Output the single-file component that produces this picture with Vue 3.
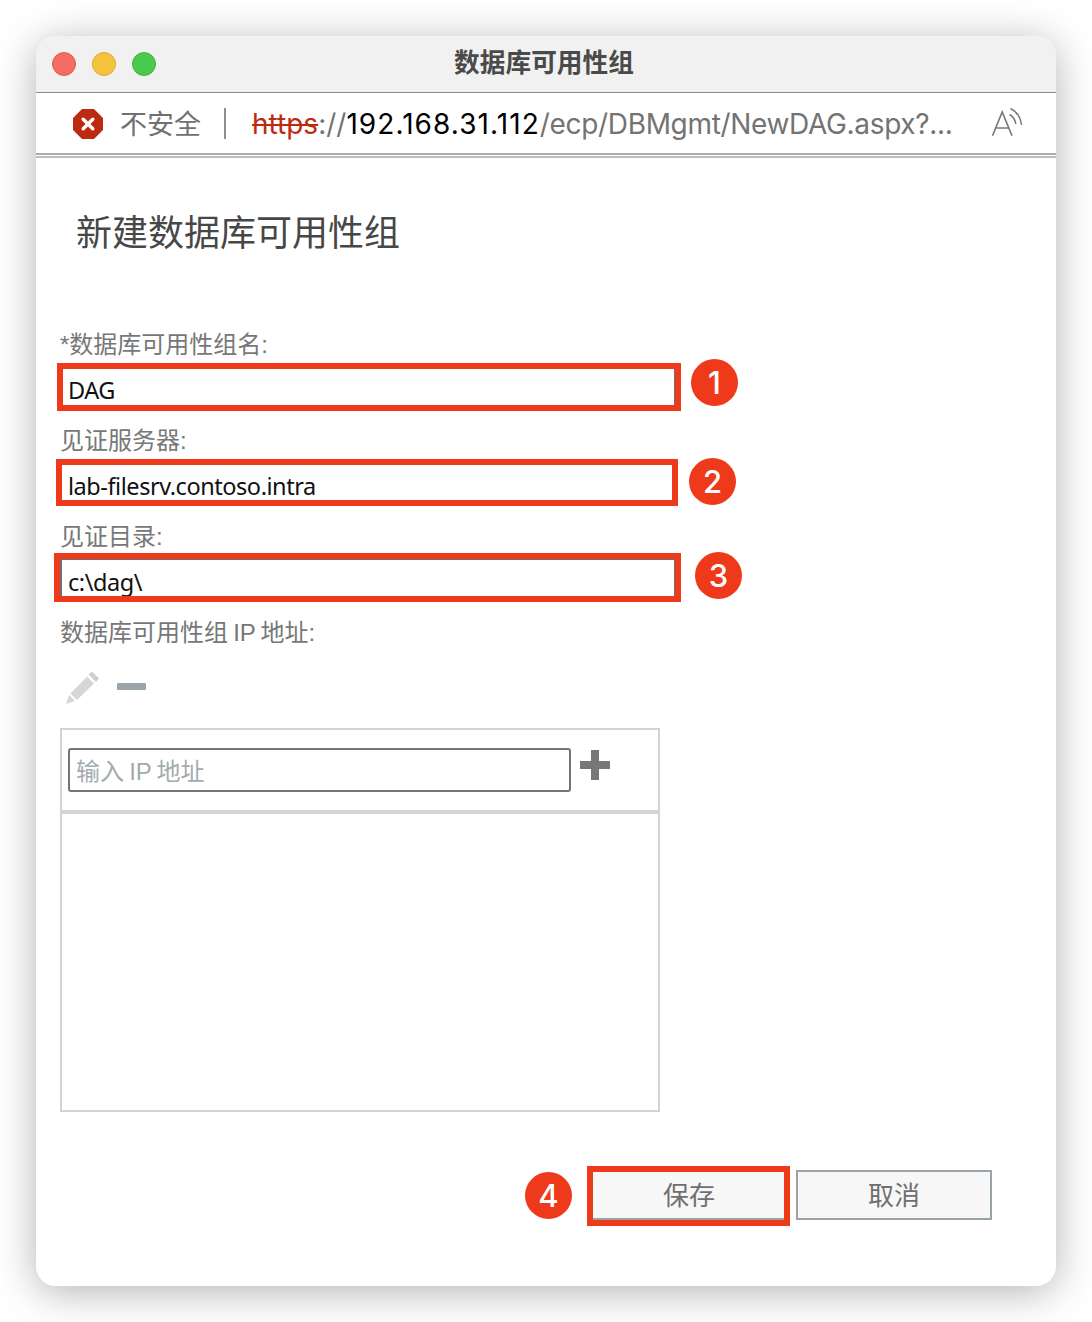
<script setup>
const fields = [
  { label: '*数据库可用性组名:', value: 'DAG', mark: 'mark-a', badge: 'badge-a', n: 1 },
  { label: '见证服务器:', value: 'lab-filesrv.contoso.intra', mark: 'mark-b', badge: 'badge-b', n: 2 },
  { label: '见证目录:', value: 'c:\\dag\\', mark: 'mark-c', badge: 'badge-c', n: 3 }
]
</script>

<template>
  <div class="stage">
    <div class="window">
      <header class="titlebar">
        <div class="lights">
          <span class="light red"></span>
          <span class="light yellow"></span>
          <span class="light green"></span>
        </div>
        <div class="wintitle">数据库可用性组</div>
      </header>

      <div class="addressbar">
        <svg class="warn" width="30" height="30" viewBox="0 0 30 30">
          <path d="M9 0h12l9 9v12l-9 9H9l-9-9V9z" fill="#bd2a12" />
          <path d="M10.2 10.2l9.6 9.6M19.8 10.2l-9.6 9.6" stroke="#fff" stroke-width="3.4" stroke-linecap="round" />
        </svg>
        <span class="insecure">不安全</span>
        <span class="sep"></span>
        <span class="url"><span class="scheme">https</span>://<span class="host">192.168.31.112</span><span class="path">/ecp/DBMgmt/NewDAG.aspx?...</span></span>
        <svg class="readaloud" width="32" height="32" viewBox="0 0 32 32" fill="none" stroke="#7b7b7b" stroke-width="1.7">
          <path d="M1.500 28.700L11.200 5l9.800 23.700M4.800 21h12.800" />
          <path d="M18.500 7.500c3.200 1.800 5.600 5 6.300 9.500M19.500 1.500c6 2.800 10 9 11 16.500" stroke-width="1.500" />
        </svg>
      </div>
      <div class="doubleline"></div>

      <main class="content">
        <h1 class="heading">新建数据库可用性组</h1>

        <div class="form">
          <div v-for="f in fields" :key="f.n" class="field">
            <div class="label">{{ f.label }}</div>
            <div class="inputwrap">
              <div class="input">{{ f.value }}</div>
              <span class="mark" :class="f.mark"></span>
              <span class="badge" :class="f.badge">{{ f.n }}</span>
            </div>
          </div>

          <div class="label">数据库可用性组 IP 地址:</div>

          <div class="tools">
            <svg class="pencil" width="34" height="34" viewBox="0 0 34 34">
              <path d="M26 1.500l7 7-3 3.500-7.500-7.500z" fill="#cfcfcf" />
              <path d="M21 6.500l7 7L11 30l-6.500-6.500z" fill="#d6d6d6" />
              <path d="M3 25l6 6-9 3z" fill="#d6d6d6" />
            </svg>
            <span class="minus"></span>
          </div>

          <div class="panel">
            <div class="panel-top">
              <div class="ipinput">输入 IP 地址</div>
              <span class="plus"></span>
            </div>
            <div class="panel-list"></div>
          </div>

          <div class="actions">
            <div class="savewrap">
              <span class="badge badge-d">4</span>
              <button class="btn">保存</button>
              <span class="mark mark-d"></span>
            </div>
            <button class="btn">取消</button>
          </div>
        </div>
      </main>
    </div>
  </div>
</template>

<style>
html, body { margin: 0; background: #fff; }
</style>

<style scoped>
.stage {
  width: 1092px;
  height: 1322px;
  padding: 36px;
  box-sizing: border-box;
  background: #fff;
  overflow: hidden;
  font-family: "Noto Sans", "Noto Sans CJK SC", sans-serif;
}
.window {
  width: 1020px;
  height: 1250px;
  background: #fff;
  border-radius: 20px;
  box-shadow: 0 6px 40px rgba(0, 0, 0, 0.3);
  overflow: hidden;
  display: flex;
  flex-direction: column;
}
.titlebar {
  height: 57px;
  flex: none;
  box-sizing: border-box;
  background: #f1f1f1;
  border-bottom: 1px solid #8c8c8c;
  position: relative;
  display: flex;
  align-items: center;
  justify-content: center;
}
.lights {
  position: absolute;
  left: 16px;
  top: 16px;
  display: flex;
  gap: 16px;
}
.light {
  width: 24px;
  height: 24px;
  border-radius: 50%;
  box-sizing: border-box;
}
.red { background: #f46d60; border: 1px solid #dc5f52; }
.yellow { background: #f4c441; border: 1px solid #dba936; }
.green { background: #4ac94c; border: 1px solid #42b143; }
.wintitle {
  font: 700 25.700px "Noto Sans CJK SC", sans-serif;
  color: #4a4a4a;
  margin-left: -4px;
  margin-top: -8px;
}
.addressbar {
  height: 60px;
  flex: none;
  display: flex;
  align-items: center;
  padding-left: 37px;
  box-sizing: border-box;
  position: relative;
}
.warn { flex: none; margin-top: 2px; }
.insecure {
  margin-left: 17px;
  margin-top: -2px;
  font: 27px "Noto Sans CJK SC", sans-serif;
  color: #707070;
}
.sep {
  width: 2px;
  height: 31px;
  background: #8f8f8f;
  margin-left: 23px;
}
.url {
  margin-left: 26px;
  margin-top: 2px;
  font: 28px "Inter", sans-serif;
  color: #737373;
  white-space: nowrap;
}
.scheme { color: #bd2a12; text-decoration: line-through; }
.host { color: #000; letter-spacing: 1.070px; }
.path { letter-spacing: -0.330px; }
.readaloud {
  position: absolute;
  right: 33px;
  top: 14px;
}
.doubleline {
  height: 5px;
  box-sizing: border-box;
  flex: none;
  border-top: 2px solid #ababab;
  border-bottom: 2px solid #bdbdbd;
}
.content {
  flex: 1;
  padding: 0 0 0 24px;
  position: relative;
}
.heading {
  margin: 0;
  height: 166px;
  padding: 46px 0 0 16px;
  box-sizing: border-box;
  font: 400 36px/52px "Noto Sans CJK SC", sans-serif;
  color: #474747;
}
.form {
  width: 940px;
}
.field {
  margin-bottom: 12px;
}
.label {
  height: 40px;
  margin-bottom: 2px;
  font: 24px/42px "Liberation Sans", "Noto Sans CJK SC", sans-serif;
  word-spacing: -1.500px;
  color: #777;
}
.inputwrap {
  position: relative;
}
.input {
  width: 616px;
  height: 42px;
  box-sizing: border-box;
  border: 2px solid #707070;
  padding: 3px 6px 0;
  font: 23.500px/38px "Noto Sans", sans-serif;
  letter-spacing: -0.450px;
  color: #111;
}
.mark {
  position: absolute;
  box-sizing: border-box;
  border: 6px solid #ee3a1b;
  pointer-events: none;
}
.mark-a { left: -3px; top: -3px; width: 624px; height: 48px; }
.mark-b { left: -4px; top: -3px; width: 622px; height: 47px; }
.mark-c { left: -6px; top: -5px; width: 627px; height: 49px; }
.badge {
  position: absolute;
  width: 47px;
  height: 47px;
  border-radius: 50%;
  background: #ee3a1b;
  color: #fff;
  display: flex;
  align-items: center;
  justify-content: center;
  font: 500 31px "Inter", sans-serif;
}
.badge-a { left: 631px; top: -7px; }
.badge-b { left: 629px; top: -4px; }
.badge-c { left: 635px; top: -6px; }
.tools {
  display: flex;
  align-items: center;
  height: 34px;
  margin-top: 18px;
  padding-left: 6px;
}
.minus {
  width: 29px;
  height: 7px;
  margin-left: 17px;
  margin-top: -2px;
  background: #9aa5a9;
  border-radius: 1px;
}
.panel {
  width: 600px;
  height: 384px;
  margin-top: 24px;
  box-sizing: border-box;
  border: 2px solid #cfd5d7;
  display: flex;
  flex-direction: column;
}
.panel-top {
  height: 84px;
  flex: none;
  box-sizing: border-box;
  border-bottom: 4px solid #d0d6d8;
  padding: 18px 0 0 6px;
  display: flex;
  align-items: flex-start;
  position: relative;
}
.ipinput {
  width: 503px;
  height: 44px;
  box-sizing: border-box;
  border: 2px solid #747474;
  border-radius: 3px;
  padding-left: 6px;
  font: 24px/43px "Liberation Sans", "Noto Sans CJK SC", sans-serif;
  word-spacing: -1.500px;
  color: #a3abae;
}
.plus {
  position: relative;
  width: 30px;
  height: 30px;
  margin: 2px 0 0 9px;
  background:
    linear-gradient(#777, #777) center / 30px 8px no-repeat,
    linear-gradient(#777, #777) center / 8px 30px no-repeat;
}
.panel-list { flex: 1; }
.actions {
  display: flex;
  justify-content: flex-end;
  gap: 9px;
  margin-top: 58px;
  width: 932px;
}
.savewrap { position: relative; }
.btn {
  display: block;
  width: 196px;
  height: 50px;
  box-sizing: border-box;
  border: 2px solid #98a4a7;
  background: #f7f7f7;
  padding: 0 0 4px;
  font: 26px "Noto Sans CJK SC", sans-serif;
  color: #6f6f6f;
}
.mark-d { left: -4px; top: -4px; width: 203px; height: 60px; }
.badge-d { left: -66px; top: 2px; }
</style>
